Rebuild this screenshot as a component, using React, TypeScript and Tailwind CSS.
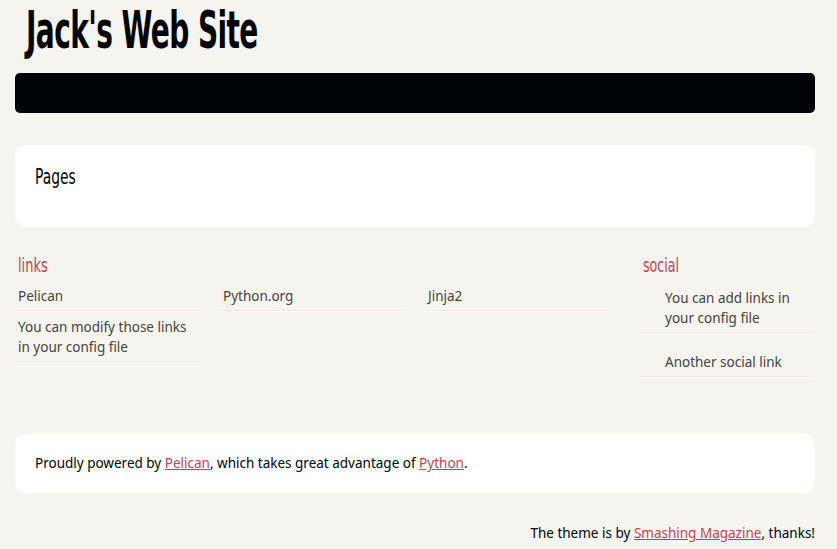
const heading = "font-['Liberation_Sans_Narrow','DejaVu_Sans_Condensed',sans-serif]";

const blogroll = ['Pelican', 'Python.org', 'Jinja2', 'You can modify those links in your config file'];

const social = ['You can add links in your config file', 'Another social link'];

export default function App() {
  return (
    <div className="min-h-screen bg-[#f5f4ef] text-[13.5px] text-[#444] font-['Noto_Sans',sans-serif]">
      <div className="ml-[15px] w-[800px]">
        <header>
          <h1 className="h-[73px] pl-[11px] pt-[2px]">
            <span
              className={`inline-block origin-left scale-x-[0.6] text-[52px] font-bold leading-[56px] tracking-[-1px] text-[#000305] ${heading}`}
            >
              Jack's Web Site
            </span>
          </h1>
          <nav className="h-[40px] rounded-[5px] bg-[#000305]" />
        </header>

        <section className="mt-[32px] h-[82px] rounded-[10px] bg-white px-[20px] pt-[18px]">
          <h2 className={`inline-block origin-left scale-x-[0.7] text-[22px] leading-[28px] text-[#000305] ${heading}`}>
            Pages
          </h2>
        </section>

        <section className="mt-[26px] flex h-[181px]">
          <div className="w-[625px]">
            <h2
              className={`ml-[3px] inline-block h-[24px] origin-left scale-x-[0.72] text-[20px] leading-[24px] text-[#c74350] ${heading}`}
            >
              links
            </h2>
            <ul className="mt-[4px] grid grid-cols-[185px_185px_185px] gap-x-[20px]">
              {blogroll.map((l) => (
                <li key={l} className="border-b border-white">
                  <div className="border-b border-[#f8e3e1] pb-[4px] pl-[3px] pt-[5px] leading-[20px]">{l}</div>
                </li>
              ))}
            </ul>
          </div>
          <div className="w-[175px]">
            <h2
              className={`ml-[3px] inline-block h-[24px] origin-left scale-x-[0.7] text-[20px] leading-[24px] text-[#c74350] ${heading}`}
            >
              social
            </h2>
            <ul className="-mt-[7px]">
              {social.map((s) => (
                <li key={s} className="border-b border-white">
                  <div className="border-b border-[#f8e3e1] pb-[4px] pl-[25px] pt-[18px] leading-[20px]">{s}</div>
                </li>
              ))}
            </ul>
          </div>
        </section>

        <footer className="flex h-[59px] items-center rounded-[10px] bg-white px-[20px] text-[#000305]">
          <p>
            Proudly powered by{' '}
            <a className="text-[#c74350] underline" href="#">
              Pelican
            </a>
            , which takes great advantage of{' '}
            <a className="text-[#c74350] underline" href="#">
              Python
            </a>
            .
          </p>
        </footer>

        <p className="mt-[30px] text-right text-[#000305]">
          The theme is by{' '}
          <a className="text-[#c74350] underline" href="#">
            Smashing Magazine
          </a>
          , thanks!
        </p>
      </div>
    </div>
  );
}
